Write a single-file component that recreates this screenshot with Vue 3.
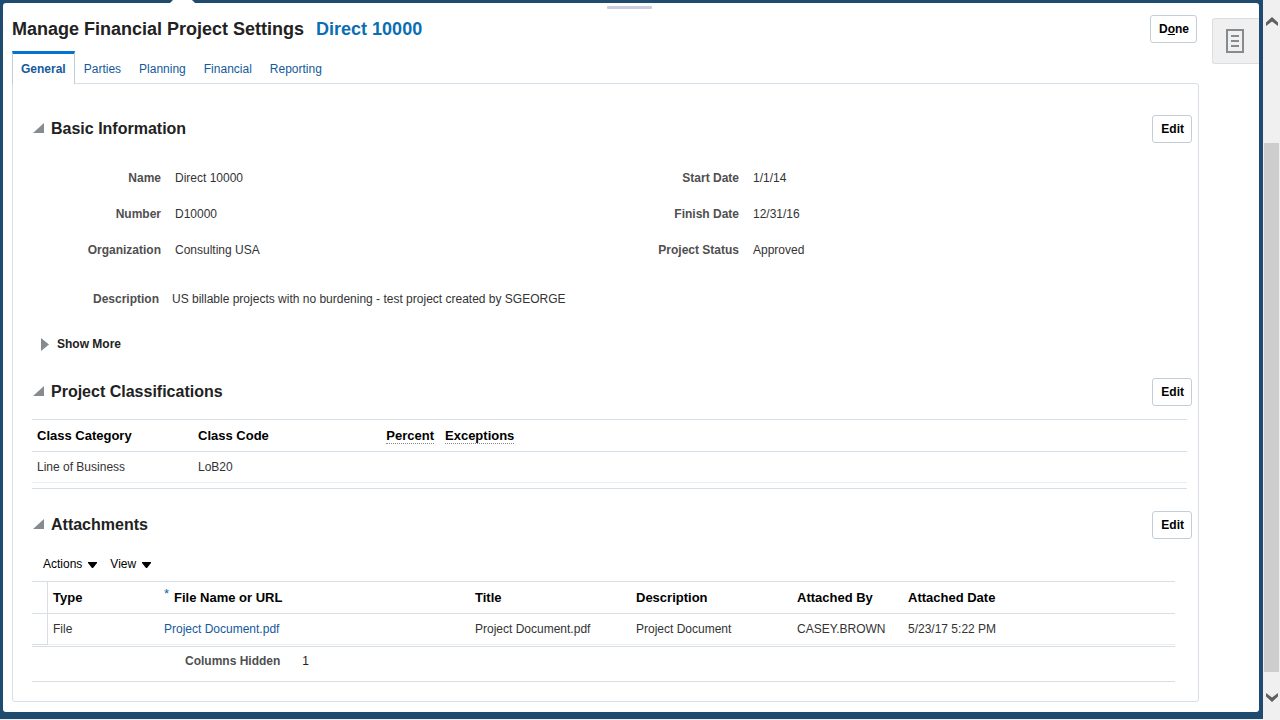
<script setup>
import { ref } from 'vue'

const tabs = ['General', 'Parties', 'Planning', 'Financial', 'Reporting']
const activeTab = ref('General')

const details = [
  { label: 'Name', value: 'Direct 10000' },
  { label: 'Start Date', value: '1/1/14' },
  { label: 'Number', value: 'D10000' },
  { label: 'Finish Date', value: '12/31/16' },
  { label: 'Organization', value: 'Consulting USA' },
  { label: 'Project Status', value: 'Approved' }
]

const classifications = [
  { category: 'Line of Business', code: 'LoB20', percent: '', exceptions: '' }
]

const attachments = [
  {
    type: 'File',
    file: 'Project Document.pdf',
    title: 'Project Document.pdf',
    description: 'Project Document',
    by: 'CASEY.BROWN',
    date: '5/23/17 5:22 PM'
  }
]
</script>

<template>
  <div class="page">
    <div class="frame">
      <span class="notch" aria-hidden="true"></span>
      <div class="sheet">
        <span class="handle" aria-hidden="true"></span>
        <main class="main">
          <header class="title-bar">
            <h1>Manage Financial Project Settings</h1>
            <span class="project">Direct 10000</span>
            <button class="btn done" type="button">D<u>o</u>ne</button>
          </header>

          <nav class="tabs">
            <a
              v-for="tab in tabs"
              :key="tab"
              href="#"
              class="tab"
              :class="{ active: tab === activeTab }"
              @click.prevent="activeTab = tab"
            >{{ tab }}</a>
          </nav>

          <div class="panel">
            <section>
              <div class="section-head">
                <button class="toggle" type="button" aria-label="Collapse Basic Information">
                  <svg width="11" height="10" viewBox="0 0 11 10"><path d="M11 0V10H0Z" fill="#868b90" /></svg>
                </button>
                <h2>Basic Information</h2>
                <button class="btn" type="button">Edit</button>
              </div>
              <dl class="fields">
                <div v-for="item in details" :key="item.label" class="field">
                  <dt>{{ item.label }}</dt>
                  <dd>{{ item.value }}</dd>
                </div>
              </dl>
              <dl class="fields-wide">
                <div class="field">
                  <dt>Description</dt>
                  <dd>US billable projects with no burdening - test project created by SGEORGE</dd>
                </div>
              </dl>
              <button class="show-more" type="button">
                <svg width="8" height="13" viewBox="0 0 8 13"><path d="M0 0L8 6.5L0 13Z" fill="#868b90" /></svg>
                Show More
              </button>
            </section>

            <section class="classes">
              <div class="section-head">
                <button class="toggle" type="button" aria-label="Collapse Project Classifications">
                  <svg width="11" height="10" viewBox="0 0 11 10"><path d="M11 0V10H0Z" fill="#868b90" /></svg>
                </button>
                <h2>Project Classifications</h2>
                <button class="btn" type="button">Edit</button>
              </div>
              <div class="class-table">
                <table>
                  <colgroup>
                    <col class="w-mid" /><col class="w-mid" /><col class="w-pct" /><col />
                  </colgroup>
                  <thead>
                    <tr>
                      <th>Class Category</th>
                      <th>Class Code</th>
                      <th class="num"><span class="hint">Percent</span></th>
                      <th><span class="hint">Exceptions</span></th>
                    </tr>
                  </thead>
                  <tbody>
                    <tr v-for="row in classifications" :key="row.code">
                      <td>{{ row.category }}</td>
                      <td>{{ row.code }}</td>
                      <td class="num">{{ row.percent }}</td>
                      <td>{{ row.exceptions }}</td>
                    </tr>
                  </tbody>
                </table>
              </div>
            </section>

            <section class="attach">
              <div class="section-head">
                <button class="toggle" type="button" aria-label="Collapse Attachments">
                  <svg width="11" height="10" viewBox="0 0 11 10"><path d="M11 0V10H0Z" fill="#868b90" /></svg>
                </button>
                <h2>Attachments</h2>
                <button class="btn" type="button">Edit</button>
              </div>
              <div class="toolbar">
                <button type="button">
                  Actions
                  <svg width="9" height="6" viewBox="0 0 9 6"><path d="M0 0H9V1L5 6H4L0 1Z" /></svg>
                </button>
                <button type="button">
                  View
                  <svg width="9" height="6" viewBox="0 0 9 6"><path d="M0 0H9V1L5 6H4L0 1Z" /></svg>
                </button>
              </div>
              <div class="file-table">
                <table>
                  <colgroup>
                    <col class="w-row" /><col class="w-small" /><col class="w-file" />
                    <col class="w-mid" /><col class="w-mid" /><col class="w-small" /><col />
                  </colgroup>
                  <thead>
                    <tr>
                      <th class="gutter"></th>
                      <th>Type</th>
                      <th><span class="required">*</span>File Name or URL</th>
                      <th>Title</th>
                      <th>Description</th>
                      <th>Attached By</th>
                      <th>Attached Date</th>
                    </tr>
                  </thead>
                  <tbody>
                    <tr v-for="row in attachments" :key="row.file">
                      <td class="gutter"></td>
                      <td>{{ row.type }}</td>
                      <td><a href="#">{{ row.file }}</a></td>
                      <td>{{ row.title }}</td>
                      <td>{{ row.description }}</td>
                      <td>{{ row.by }}</td>
                      <td>{{ row.date }}</td>
                    </tr>
                  </tbody>
                </table>
                <div class="table-foot">
                  <span class="foot-label">Columns Hidden</span>
                  <span>1</span>
                </div>
              </div>
            </section>
          </div>
        </main>

        <aside class="rail">
          <button type="button" class="rail-btn" aria-label="Contextual information">
            <svg width="18" height="24" viewBox="0 0 18 24" fill="none" stroke="#868b90" stroke-width="2">
              <rect x="1" y="1" width="16" height="22" />
              <path d="M5 7H13M5 12H13M5 17H13" />
            </svg>
          </button>
        </aside>
      </div>
    </div>

    <div class="scroll" aria-hidden="true">
      <svg class="up" width="12" height="9" viewBox="0 0 12 9"><path d="M0 5.5L6 0L12 5.5V9L6 4.5L0 9Z" fill="#606060" /></svg>
      <span class="thumb"></span>
      <svg class="down" width="12" height="9" viewBox="0 0 12 9"><path d="M0 0L6 4.5L12 0V3.5L6 9L0 3.5Z" fill="#606060" /></svg>
    </div>
  </div>
</template>

<style>
body {
  background: #f0f0f0;
}
</style>

<style scoped>
.page {
  display: flex;
  align-items: flex-start;
  font: 12px/16px "Liberation Sans", Arial, sans-serif;
  color: #333;
}

.page button {
  font: inherit;
  color: #000;
  border: 0;
  padding: 0;
  background: none;
  cursor: pointer;
}

.page svg {
  display: block;
  flex: none;
}

a {
  color: #145a9c;
  text-decoration: none;
}

.frame {
  position: relative;
  flex: 1;
  min-width: 0;
  padding: 3px 4px 7px 3px;
  background: #1f4b6e;
}

.notch {
  position: absolute;
  top: 0;
  left: 170px;
  width: 25px;
  height: 3px;
  background: #fff;
  clip-path: polygon(3px 0, 22px 0, 25px 3px, 0 3px);
}

.sheet {
  position: relative;
  display: flex;
  gap: 13px;
  padding: 0 0 10px 9px;
  background: #fff;
  border-radius: 3px;
}

.handle {
  position: absolute;
  top: 3px;
  left: 50%;
  width: 45px;
  height: 3px;
  margin-left: -24px;
  border-radius: 1px;
  background: #c9cede;
}

.main {
  flex: 1;
  min-width: 0;
}

.title-bar {
  display: flex;
  align-items: center;
  gap: 12px;
  padding: 12px 2px 8px 0;
}

h1,
.project {
  margin: 0;
  font-size: 18px;
  line-height: 28px;
  font-weight: bold;
  color: #222;
}

.project {
  color: #0a6eb4;
}

.page .btn {
  height: 28px;
  margin-left: auto;
  padding: 0 7px 0 8px;
  border: 1px solid #c4ced7;
  border-radius: 3px;
  background: #fff;
  font-weight: bold;
}

.tabs {
  display: flex;
  height: 32px;
}

.tab {
  padding: 10px 9px 0;
  line-height: 16px;
}

.tab.active {
  z-index: 1;
  box-sizing: border-box;
  height: 33px;
  padding: 7px 8px 0;
  border: 1px solid #c4ced7;
  border-top: 3px solid #0572ce;
  border-bottom: 0;
  background: #fff;
  font-weight: bold;
}

.panel {
  padding: 31px 6px 19px 19px;
  border: 1px solid #d6dfe6;
  border-radius: 0 3px 3px 3px;
}

.section-head {
  display: flex;
  align-items: center;
  padding-left: 1px;
}

.toggle {
  margin: 0 7px 2px 0;
}

h2 {
  margin: 0;
  font-size: 16px;
  line-height: 28px;
  color: #222;
}

dl,
dd {
  margin: 0;
}

.fields {
  display: grid;
  grid-template-columns: 1fr 1fr;
  padding: 17px 4px 0 0;
}

.field {
  display: grid;
  grid-template-columns: 129px 1fr;
  gap: 14px;
  line-height: 36px;
}

.fields-wide {
  padding-top: 13px;
}

.fields-wide .field {
  grid-template-columns: 127px 1fr;
  gap: 13px;
}

dt {
  text-align: right;
  font-weight: bold;
  color: #4f4f4f;
}

.page .show-more {
  display: flex;
  align-items: center;
  gap: 8px;
  height: 20px;
  margin: 17px 0 0 9px;
  font-weight: bold;
  color: #222;
}

.classes {
  padding-top: 24px;
}

.attach {
  padding-top: 22px;
}

table {
  width: 100%;
  table-layout: fixed;
  border-collapse: separate;
  border-spacing: 0;
  text-align: left;
}

.w-row {
  width: 16px;
}

.w-small {
  width: 111px;
}

.w-mid {
  width: 161px;
}

.w-pct {
  width: 86px;
}

.w-file {
  width: 311px;
}

th,
td {
  box-sizing: border-box;
  padding: 0 5px;
}

th {
  height: 32px;
  border-bottom: 1px solid #d6dfe6;
  font-size: 13px;
  color: #000;
}

td {
  height: 31px;
  border-bottom: 1px solid #e9edf0;
}

.num {
  padding-right: 6px;
  text-align: right;
}

.hint {
  border-bottom: 1px dotted #888;
}

.gutter {
  border-right: 1px solid #d6dfe6;
  border-bottom-color: #d6dfe6;
}

.required {
  margin-right: 5px;
  font-weight: normal;
  color: #0a5fb4;
  vertical-align: 4px;
  line-height: 10px;
}

.class-table {
  margin: 13px 5px 0 0;
  padding-bottom: 5px;
  border: solid #d6dfe6;
  border-width: 1px 0;
}

.toolbar {
  display: flex;
  gap: 13px;
  padding: 15px 0 7px 11px;
}

.toolbar button {
  display: flex;
  align-items: center;
  gap: 6px;
  height: 20px;
}

.toolbar svg {
  margin-top: 2px;
}

.file-table {
  margin-right: 17px;
  border: solid #d6dfe6;
  border-width: 1px 0;
}

.table-foot {
  display: flex;
  gap: 22px;
  margin-top: 1px;
  padding: 6px 0 12px 153px;
  border-top: 1px solid #d6dfe6;
  color: #222;
}

.foot-label {
  font-weight: bold;
  color: #4f4f4f;
}

.rail {
  padding-top: 15px;
}

.page .rail-btn {
  display: flex;
  align-items: center;
  width: 47px;
  height: 46px;
  padding-left: 13px;
  border: 1px solid #dadfe4;
  border-right: 0;
  border-radius: 3px 0 0 3px;
  background: #f0f0f0;
}

.scroll {
  display: grid;
  grid-template-rows: 143px 1fr 48px;
  justify-items: center;
  width: 17px;
  height: 100vh;
  background: #f0f0f0;
}

.up {
  margin-top: 17px;
}

.thumb {
  width: 15px;
  background: #cdcdcd;
}

.down {
  margin-top: 21px;
}
</style>
